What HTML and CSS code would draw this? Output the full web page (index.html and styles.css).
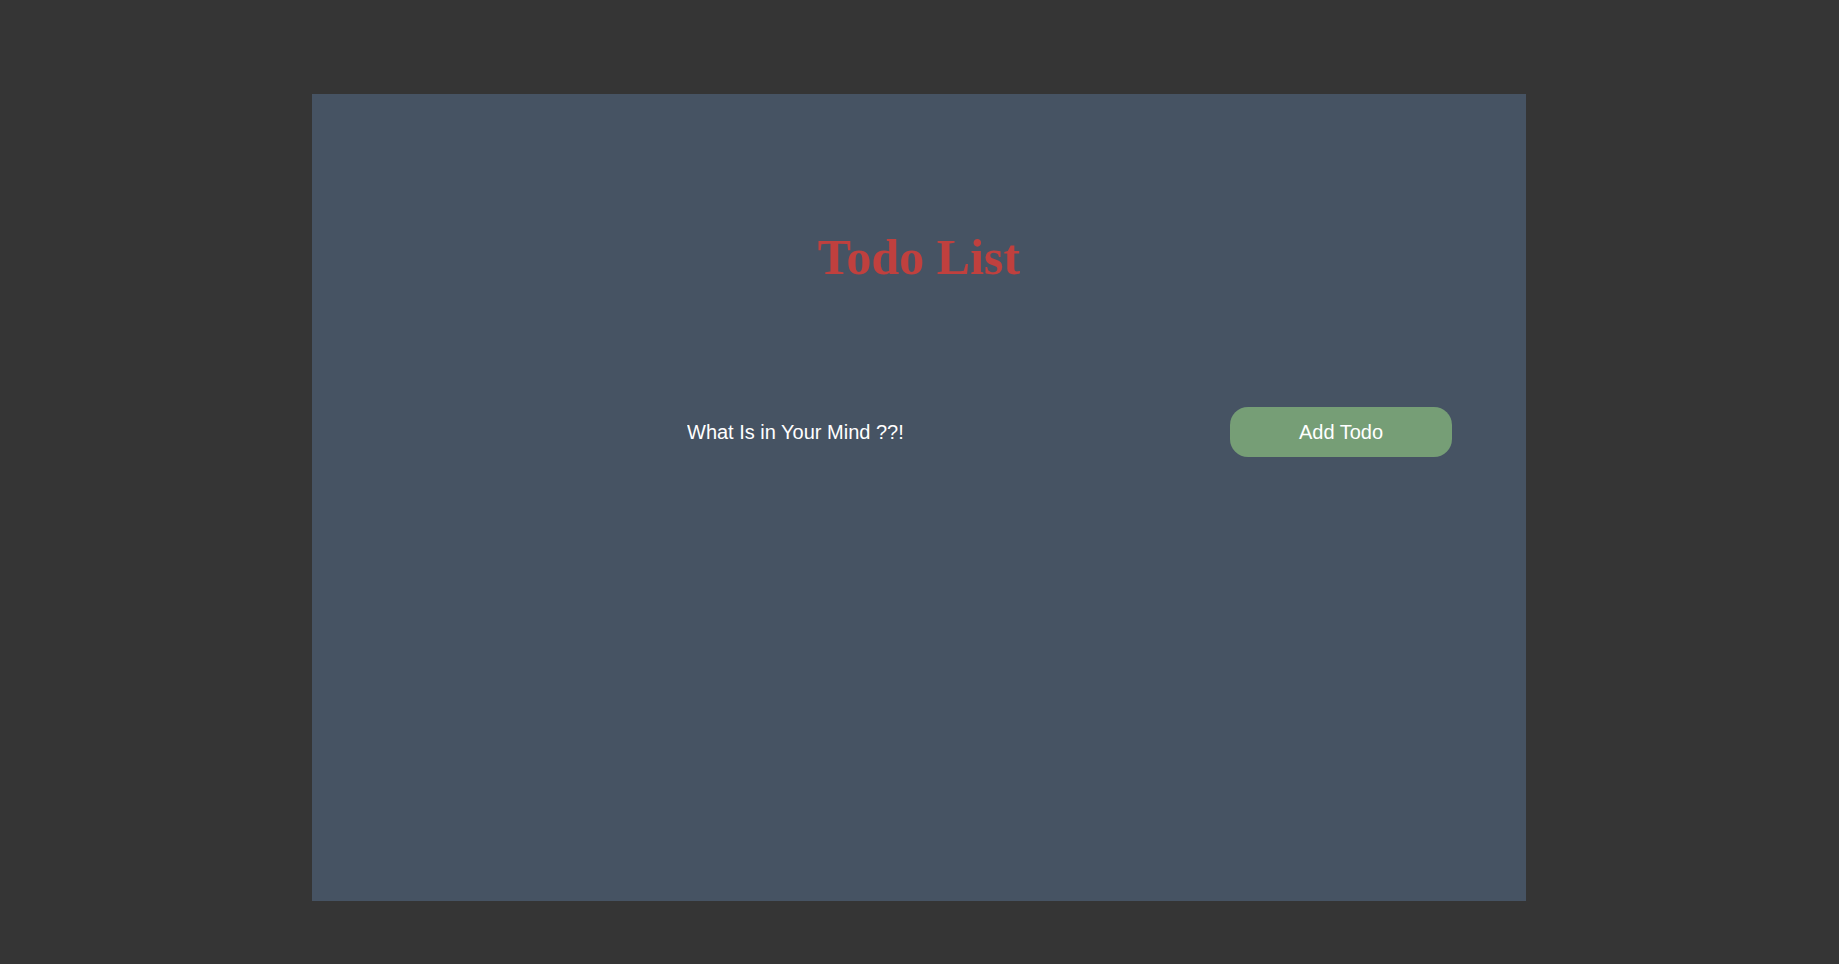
FILE: index.html
```html
<!DOCTYPE html>
<html lang="en">
<head>
<meta charset="utf-8">
<title>Todo List</title>
<link rel="stylesheet" href="styles.css">
</head>
<body>
  <main class="panel">
    <h1 class="title">Todo List</h1>
    <form class="todo-form">
      <input class="todo-input" type="text" placeholder="What Is in Your Mind ??!">
      <button class="add-btn" type="button">Add Todo</button>
    </form>
  </main>
</body>
</html>
```
FILE: styles.css
```css
html, body {
  margin: 0;
  padding: 0;
}
body {
  background: #353535;
  font-family: "Liberation Sans", Arial, sans-serif;
}
.panel {
  box-sizing: border-box;
  width: 1214px;
  height: 807px;
  margin: 94px 0 0 312px;
  padding-top: 135px;
  background: #465363;
}
.title {
  margin: 0;
  text-align: center;
  font-family: "Liberation Serif", "Times New Roman", serif;
  font-weight: bold;
  font-size: 50px;
  line-height: 56px;
  color: #c0403e;
}
.todo-form {
  display: flex;
  align-items: center;
  margin-top: 122px;
  padding: 0 74px 0 375px;
}
.todo-input {
  flex: 1;
  min-width: 0;
  border: none;
  outline: none;
  background: transparent;
  padding: 0;
  font-family: "Liberation Sans", Arial, sans-serif;
  font-size: 20px;
  color: #ffffff;
}
.todo-input::placeholder {
  color: #ffffff;
  opacity: 1;
}
.add-btn {
  width: 222px;
  height: 50px;
  border: none;
  border-radius: 18px;
  background: #769e76;
  color: #ffffff;
  font-family: "Liberation Sans", Arial, sans-serif;
  font-size: 20px;
  padding: 0;
  cursor: pointer;
}
```
